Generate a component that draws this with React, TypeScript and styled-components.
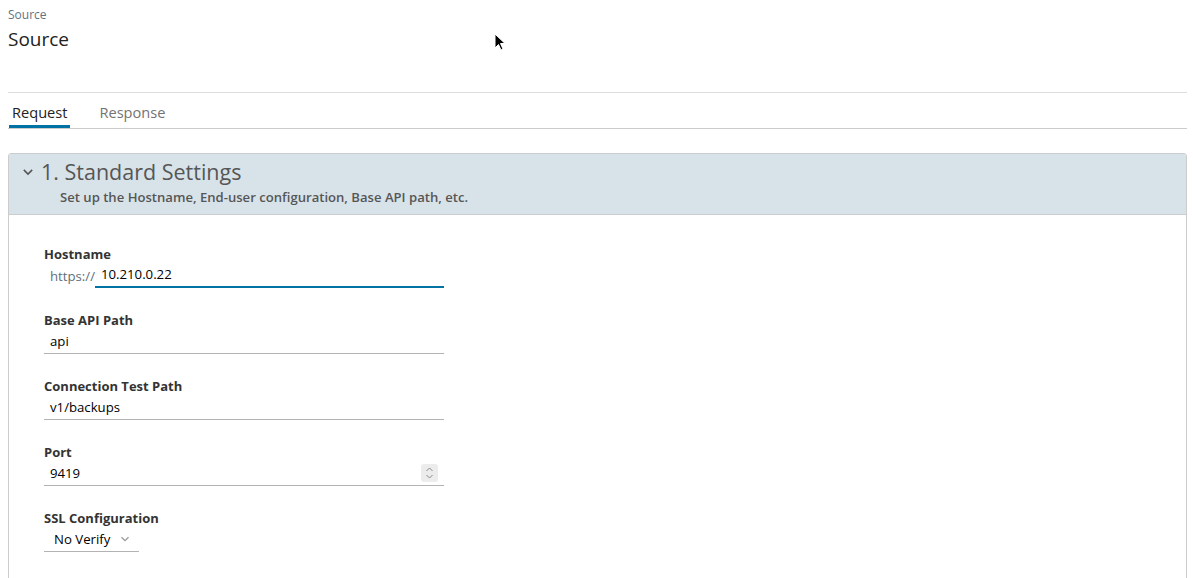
import React, { FC } from 'react';
import styled, { createGlobalStyle } from 'styled-components';

const GlobalStyle = createGlobalStyle`
  body {
    margin: 0;
    background: #fff;
    font-family: 'Open Sans', Lato, sans-serif;
    color: #333;
  }
`;

const Page = styled.div`
  position: relative;
  padding: 8px 6px 0 8px;
  height: 578px;
  box-sizing: border-box;
  overflow: hidden;
`;

const Breadcrumb = styled.div`
  font-size: 12px;
  line-height: 14px;
  color: #5f7383;
`;

const Title = styled.h1`
  margin: 5px 0 0;
  font-size: 19px;
  line-height: 24px;
  font-weight: 400;
  color: #222;
`;

const Divider = styled.hr`
  margin: 41px 0 0;
  border: none;
  border-top: 1px solid #ddd;
`;

const TabBar = styled.div`
  display: flex;
  gap: 26px;
  height: 35px;
  padding-left: 1px;
  border-bottom: 1px solid #ccc;
`;

const Tab = styled.div<{ $active?: boolean }>`
  display: flex;
  align-items: center;
  padding: 2px 3px 0;
  font-size: 14.6px;
  color: ${(p) => (p.$active ? '#222' : '#737373')};
  box-shadow: ${(p) => (p.$active ? 'inset 0 -3px 0 #0072a3' : 'none')};
`;

const Card = styled.section`
  margin-top: 24px;
  border: 1px solid #ccc;
  border-radius: 3px;
  overflow: hidden;
`;

const CardHeader = styled.div`
  height: 61px;
  box-sizing: border-box;
  background: #d8e3e9;
  border-bottom: 1px solid #ccc;
  padding: 6px 0 0 13px;
`;

const HeaderTop = styled.div`
  display: flex;
  align-items: center;
  gap: 7px;
  height: 24px;
`;

const HeaderTitle = styled.h2`
  margin: 0;
  font-size: 21.5px;
  line-height: 24px;
  font-weight: 400;
  color: #565656;
`;

const HeaderDesc = styled.div`
  margin: 5px 0 0 38px;
  font-size: 13.1px;
  line-height: 16px;
  font-weight: 600;
  color: #565656;
`;

const CardBody = styled.div`
  padding: 30px 0 40px 35px;
`;

const Field = styled.div`
  margin-bottom: 23px;
`;

const Label = styled.label`
  display: block;
  font-size: 13px;
  line-height: 18px;
  font-weight: 700;
  color: #333;
`;

const InputRow = styled.div<{ $plain?: boolean }>`
  display: flex;
  align-items: center;
  width: 400px;
  height: 25px;
  box-sizing: border-box;
  border-bottom: ${(p) => (p.$plain ? 'none' : '1px solid #b3b3b3')};
  font-size: 13.2px;
`;

const Prefix = styled.span`
  padding-left: 6px;
  color: #5f6f7a;
`;

const FocusedInput = styled.div`
  flex: 1;
  height: 25px;
  box-sizing: border-box;
  padding-left: 6px;
  line-height: 23px;
  border-bottom: 2px solid #0072a3;
  color: #000;
`;

const Value = styled.span`
  flex: 1;
  padding-left: 6px;
  color: #000;
`;

const Spinner = styled.div`
  display: flex;
  align-items: center;
  justify-content: center;
  width: 17px;
  height: 18px;
  margin-right: 6px;
  border-radius: 3px;
  background: #ececec;
`;

const SelectRow = styled.div`
  display: flex;
  align-items: center;
  gap: 10px;
  width: 95px;
  height: 25px;
  box-sizing: border-box;
  padding-left: 10px;
  border-bottom: 1px solid #b3b3b3;
  font-size: 13.2px;
  color: #000;
`;

const Cursor = styled.svg`
  position: absolute;
  left: 494px;
  top: 33px;
`;

const Chevron: FC<{ size?: number; color?: string }> = ({ size = 10, color = '#565656' }) => (
  <svg width={size} height={size} viewBox="0 0 10 10">
    <path d="M1.5 3.2 L5 6.7 L8.5 3.2" fill="none" stroke={color} strokeWidth="1.3" />
  </svg>
);

const SpinIcon: FC = () => (
  <svg width="9" height="14" viewBox="0 0 9 14">
    <path d="M1.5 5 L4.5 2 L7.5 5" fill="none" stroke="#8a8a8a" strokeWidth="1" />
    <path d="M1.5 9 L4.5 12 L7.5 9" fill="none" stroke="#8a8a8a" strokeWidth="1" />
  </svg>
);

export default function App() {
  return (
    <Page>
      <GlobalStyle />
      <Breadcrumb>Source</Breadcrumb>
      <Title>Source</Title>
      <Divider />
      <TabBar>
        <Tab $active>Request</Tab>
        <Tab>Response</Tab>
      </TabBar>
      <Card>
        <CardHeader>
          <HeaderTop>
            <Chevron size={12} />
            <HeaderTitle>1. Standard Settings</HeaderTitle>
          </HeaderTop>
          <HeaderDesc>Set up the Hostname, End-user configuration, Base API path, etc.</HeaderDesc>
        </CardHeader>
        <CardBody>
          <Field>
            <Label>Hostname</Label>
            <InputRow $plain>
              <Prefix>https://</Prefix>
              <FocusedInput>10.210.0.22</FocusedInput>
            </InputRow>
          </Field>
          <Field>
            <Label>Base API Path</Label>
            <InputRow>
              <Value>api</Value>
            </InputRow>
          </Field>
          <Field>
            <Label>Connection Test Path</Label>
            <InputRow>
              <Value>v1/backups</Value>
            </InputRow>
          </Field>
          <Field>
            <Label>Port</Label>
            <InputRow>
              <Value>9419</Value>
              <Spinner>
                <SpinIcon />
              </Spinner>
            </InputRow>
          </Field>
          <Field>
            <Label>SSL Configuration</Label>
            <SelectRow>
              <span>No Verify</span>
              <Chevron size={10} color="#9a9a9a" />
            </SelectRow>
          </Field>
        </CardBody>
      </Card>
      <Cursor width="12" height="18" viewBox="0 0 12 18">
        <path d="M1 1 L1 15 L4.5 11.5 L7 17 L9 16 L6.5 10.5 L11 10.5 Z" fill="#000" stroke="#fff" strokeWidth="1" />
      </Cursor>
    </Page>
  );
}
